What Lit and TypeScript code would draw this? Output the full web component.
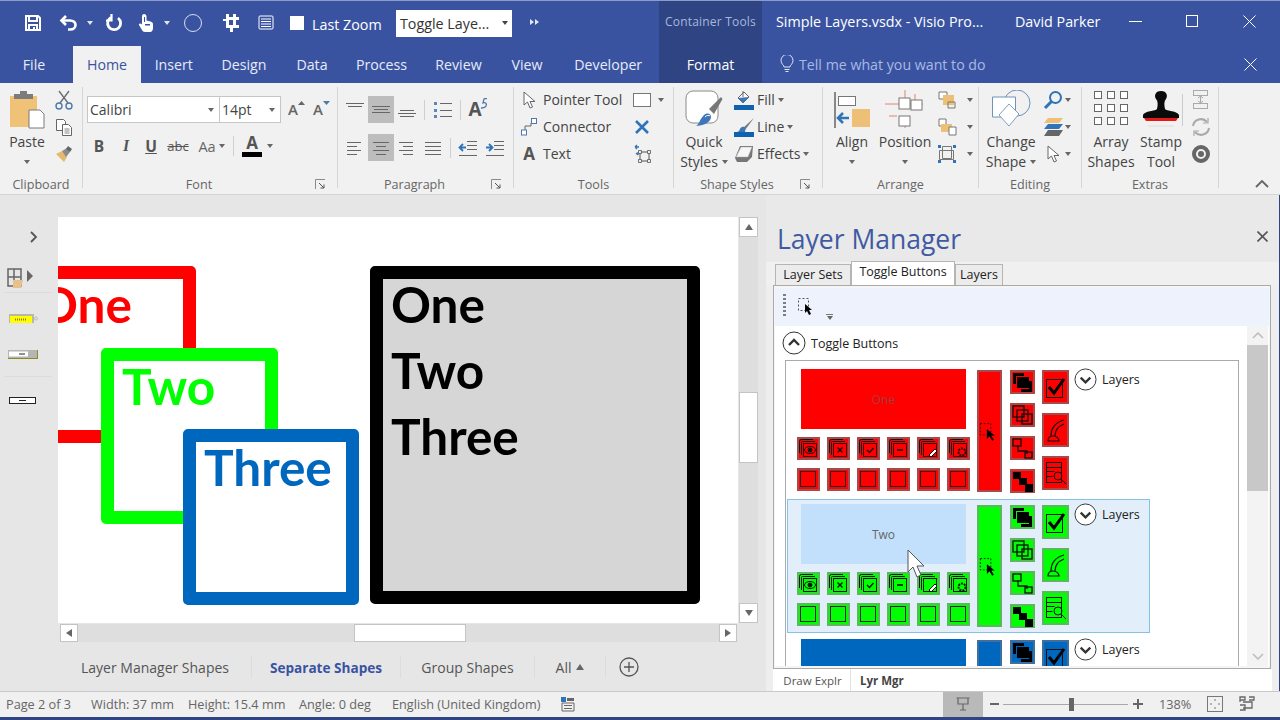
import { LitElement, html, css, svg } from "lit";
import { customElement } from "lit/decorators.js";

const caret = html`<span class="caret"></span>`;

// ---- quick access icons ----
const qSave = html`<svg width="18" height="18" viewBox="0 0 18 18" fill="none" stroke="#fff" stroke-width="2"><path d="M2 2h12l2 2v12H2z"/><path d="M5 2v5h8V2M5 16v-5h8v5"/><path d="M9 13h2v3H9z" fill="#fff" stroke="none"/></svg>`;
const qUndo = html`<svg width="20" height="18" viewBox="0 0 20 18" fill="none" stroke="#fff" stroke-width="2.6"><path d="M7 2 2.500 6.500 7 11"/><path d="M3 6.500h8c3.500 0 5.500 2 5.500 4.500S14.500 15.500 11 15.500H9"/></svg>`;
const qRedo = html`<svg width="18" height="18" viewBox="0 0 18 18" fill="none" stroke="#fff" stroke-width="2.8"><path d="M6 3.500A6.500 6.500 0 1 0 13 4"/><path d="M6.500 0v6.500H1" stroke-width="2.200"/></svg>`;
const qHand = html`<svg width="18" height="20" viewBox="0 0 18 20" fill="#fff"><path d="M7 1c1.500 0 2.500 1 2.500 2.500v4l4 1c1.500.4 2.500 1.300 2.500 3V15c0 2-1 4-3 4H8c-1.500 0-2.500-1-3-2L2 12c-.5-1 .8-2.200 2-1.300l1 .8V3.500C5 2 5.800 1 7 1z"/><path d="M7 4h1v5H7z" fill="#3a53a1"/><path d="M8 11h5v1.500H8z" fill="#3a53a1"/></svg>`;
const qCircle = html`<svg width="20" height="20" viewBox="0 0 20 20" fill="none" stroke="#d6def0" stroke-width="1"><circle cx="10" cy="10" r="8.500"/></svg>`;
const qCrop = html`<svg width="18" height="18" viewBox="0 0 18 18" fill="#fff"><path d="M5 0h3v3h4V0h3v3h3v3h-3v5h3v3h-3v0h-3v4H9v-4H5v-7H2V5h3zM8 6v5h4V6z"/></svg>`;
const qDoc = html`<svg width="16" height="16" viewBox="0 0 16 16" fill="none" stroke="#fff"><rect x="1" y="1" width="14" height="13" rx="1"/><path d="M3 4h10M3 6.500h10M3 9h10M3 11.500h10"/></svg>`;

// ---- ribbon icons ----
const paste = html`<svg width="36" height="40" viewBox="0 0 36 40"><path d="M1 6h27v31H1z" fill="#f0c277"/><path d="M5 4h19v5H5z" fill="#7c7c7c"/><path d="M11 1h7v4h-7z" fill="#7c7c7c"/><path d="M20 20h11l4 4v14H20z" fill="#fff" stroke="#7a7a7a"/></svg>`;
const cut = html`<svg width="18" height="20" viewBox="0 0 18 20" fill="none" stroke="#6a7078" stroke-width="1.400"><path d="M4 1l9 12M14 1 5 13"/><circle cx="4" cy="16" r="3" stroke="#4d79ae"/><circle cx="14" cy="16" r="3" stroke="#4d79ae"/></svg>`;
const copy = html`<svg width="18" height="18" viewBox="0 0 18 18" fill="#fff" stroke="#666"><path d="M1.500 1.500h7l2 2v9h-9z"/><path d="M7.500 6.500h6l3 3v8h-9z"/><path d="M9.500 11h5M9.500 13h5M9.500 15h5" stroke-width=".8"/></svg>`;
const painter = html`<svg width="18" height="18" viewBox="0 0 18 18"><path d="M1 9l6-3 5 6-3 5z" fill="#e7b96b"/><path d="M7 6l5-3 3 4-4 5z" fill="#8a8a8a"/><path d="M13 1l4 3-2 3-4-3z" fill="#666"/></svg>`;
const bullets = html`<svg width="20" height="18" viewBox="0 0 20 18"><path d="M1 1h3v3H1zM1 8h3v3H1zM1 14h3v3H1z" fill="#5b87bd"/><path d="M7 2.500h12M7 9.500h12M7 15.500h12" stroke="#666"/></svg>`;
const curl = html`<svg width="8" height="12" viewBox="0 0 8 12" fill="none" stroke="#4d79ae" stroke-width="1.300"><path d="M4 .7h3M4 .7 3 5c3-1 4 1 3 3S3 10 1 10"/></svg>`;
const outdent = html`<svg width="20" height="18" viewBox="0 0 20 18" fill="none" stroke="#666"><path d="M9 2.500h10M9 6.500h10M9 10.500h10M1 16.500h18" /><path d="M8 8.500H2M5 5 1.500 8.500 5 12" stroke="#2f73b8" stroke-width="1.800"/></svg>`;
const indent = html`<svg width="20" height="18" viewBox="0 0 20 18" fill="none" stroke="#666"><path d="M9 2.500h10M9 6.500h10M9 10.500h10M1 16.500h18" /><path d="M1 8.500h6M4 5l3.500 3.500L4 12" stroke="#2f73b8" stroke-width="1.800"/></svg>`;
const launcher = html`<svg width="11" height="11" viewBox="0 0 11 11" fill="none" stroke="#8a8a8a"><path d="M.5 10V.5H10"/><path d="M4 4l5 5M9 5.500V9H5.500" stroke="#555"/></svg>`;
const pointer = html`<svg width="13" height="18" viewBox="0 0 13 18" fill="#fff" stroke="#666"><path d="M1 1v13l3.500-3 2.500 6 2.500-1-2.500-5.500H12z"/></svg>`;
const connector = html`<svg width="18" height="18" viewBox="0 0 18 18" fill="#fff" stroke="#4d79ae"><path d="M5 12V8h6V5" fill="none" stroke="#666"/><rect x="1.500" y="12" width="5" height="5"/><rect x="11.500" y=".5" width="5" height="5"/></svg>`;
const xBlue = html`<svg width="14" height="14" viewBox="0 0 14 14" stroke="#2f73b8" stroke-width="2.600"><path d="M1 1l12 12M13 1 1 13"/></svg>`;
const rotateBox = html`<svg width="20" height="20" viewBox="0 0 20 20" fill="none"><rect x="8" y="8" width="9" height="9" stroke="#555"/><path d="M7 3H3M3 3 5 1M3 3 5 5M6 8v3M6 11 4 9" stroke="#2f73b8" stroke-width="1.300"/><path d="M6.500 6.500h3v3h-3zM15.500 6.500h3v3h-3zM6.500 15.500h3v3h-3zM15.500 15.500h3v3h-3z" fill="#eee" stroke="#555" stroke-width=".8"/></svg>`;
const quick = html`<svg width="38" height="38" viewBox="0 0 38 38"><rect x="1" y="1" width="32" height="32" rx="7" fill="#fff" stroke="#8a8a8a"/><path d="M24 19 36 7l1.500 2L29 24z" fill="#777"/><path d="M10 36c4 0 4-6 9-11 4-3 7-1 7 2 0 5-7 9-16 9z" fill="#3e77b8"/><path d="M20 27c2-2 4-2 5-1" stroke="#fff" fill="none"/></svg>`;
const fill = html`<svg width="20" height="20" viewBox="0 0 20 20"><path d="M4 8l6-6 5 5-6 6z" fill="#fff" stroke="#666"/><path d="M4 8l11-1-6 6z" fill="#3e77b8"/><path d="M9 1v6" stroke="#666"/><path d="M0 15h20v5H0z" fill="#0f62b0"/></svg>`;
const line = html`<svg width="20" height="20" viewBox="0 0 20 20"><path d="M20 1 9 11l2 2z" fill="#777"/><path d="M3 15c3 0 2-4 5-5s4 2 3 5z" fill="#3e77b8"/><path d="M0 15h20v5H0z" fill="#0f62b0"/></svg>`;
const effects = html`<svg width="20" height="18" viewBox="0 0 20 18"><path d="M1 13 6 1h13l-1 11-5 5H3z" fill="#777"/><path d="M2 12 7 2h11l-4 10z" fill="#f6f6f6" stroke="#aaa" stroke-width=".5"/></svg>`;
const align = html`<svg width="36" height="38" viewBox="0 0 36 38"><path d="M0 2h2v36H0z" fill="#888"/><rect x="4.500" y="6.500" width="17" height="9" fill="#fff" stroke="#777"/><path d="M18 19h18v18H18z" fill="#eec077"/><path d="M4 28h11M9 23l-5 5 5 5" fill="none" stroke="#2f73b8" stroke-width="2.500"/></svg>`;
const position = html`<svg width="40" height="40" viewBox="0 0 40 40" fill="none" stroke="#e2846f"><path d="M20 0v8M0 14h38M20 26v12M4 26h8M30 4v10"/><rect x="14" y="8" width="11" height="11" fill="#fff" stroke="#777"/><rect x="26" y="10" width="11" height="10" fill="#fff" stroke="#777"/><rect x="14" y="26" width="11" height="10" fill="#fff" stroke="#777"/></svg>`;
const order1 = html`<svg width="20" height="18" viewBox="0 0 20 18"><path d="M2 1h8v7H2z" fill="#fff" stroke="#777"/><path d="M6 4h11v10H6z" fill="#eec077"/><path d="M11 11h7v6h-7z" fill="none" stroke="#777"/></svg>`;
const order2 = html`<svg width="20" height="18" viewBox="0 0 20 18"><path d="M2 1h7v7H2z" fill="#fff" stroke="#777"/><path d="M4 6h11v8H4z" fill="#eec077"/><path d="M12 9h7v8h-7z" fill="#fff" stroke="#777"/></svg>`;
const group = html`<svg width="20" height="20" viewBox="0 0 20 20" fill="none" stroke="#777"><path d="M5.500 2.500h9v12h-9zM2.500 6.500h14v9h-14z"/><path d="M1 1h3v3H1zM16 1h3v3h-3zM1 16h3v3H1zM16 16h3v3h-3z" fill="#2f73b8" stroke="none"/></svg>`;
const change = html`<svg width="40" height="40" viewBox="0 0 40 40" fill="#fff" stroke="#6d92bd"><circle cx="26" cy="13" r="13" fill="none"/><path d="M1.500 7h23v20h-23z"/><path d="M18 14l10 10-10 12L8 25z" stroke="#7aa0c7"/></svg>`;
const search = html`<svg width="20" height="20" viewBox="0 0 20 20" fill="none" stroke="#2f73b8" stroke-width="2"><circle cx="12.500" cy="7.500" r="5.500"/><path d="M8.500 11.500 2 18" stroke-width="3"/></svg>`;
const layers = html`<svg width="20" height="20" viewBox="0 0 20 20"><path d="M5 1h15l-4 5H1z" fill="#eec077"/><path d="M5 7h15l-4 5H1z" fill="#2f73b8"/><path d="M5 13h15l-4 6H1z" fill="#666"/></svg>`;
const grid9 = html`<svg width="36" height="36" viewBox="0 0 36 36" fill="#fff" stroke="#666">${[0, 13, 26].map((y) => [0, 13, 26].map((x) => svg`<rect x="${x + 1.5}" y="${y + 1.5}" width="7" height="7"/>`))}</svg>`;
const stamp = html`<svg width="38" height="42" viewBox="0 0 38 42"><path d="M14 9c-2-3-1-8 5-8s7 5 5 8c-2 2-2 6-1 10 1 2 13 2 14 6v3H1v-3c1-4 13-4 14-6 1-4 1-8-1-10z" fill="#0b0b0b"/><path d="M2 28h34l-2 3H4z" fill="#e21a1a"/><path d="M6 36h26" stroke="#ddd"/></svg>`;
const align3 = html`<svg width="16" height="20" viewBox="0 0 16 20" fill="none" stroke="#a9a9a9"><rect x=".5" y=".5" width="14" height="5"/><rect x=".5" y="13.500" width="14" height="5"/><path d="M7.500 6v7M5 8l2.500-2L10 8M5 11l2.500 2 2.500-2"/></svg>`;
const refresh = html`<svg width="20" height="20" viewBox="0 0 20 20" fill="none" stroke="#a9a9a9" stroke-width="2"><path d="M2 9a8 8 0 0 1 14-4M18 11a8 8 0 0 1-14 4"/><path d="M17 1v5h-5M3 19v-5h5" stroke-width="1.200"/></svg>`;
const target = html`<svg width="20" height="20" viewBox="0 0 20 20" fill="none"><circle cx="10" cy="10" r="7" stroke="#666" stroke-width="4"/><circle cx="10" cy="10" r="3" fill="#666"/></svg>`;
const chevUp = html`<svg width="14" height="8" viewBox="0 0 14 8" fill="none" stroke="#666" stroke-width="1.800"><path d="M1 7l6-6 6 6"/></svg>`;
const xThin = html`<svg width="13" height="13" viewBox="0 0 13 13" stroke="#fff"><path d="M.5.5l12 12M12.500.5l-12 12"/></svg>`;
const bulb = html`<svg width="14" height="18" viewBox="0 0 14 18" fill="none" stroke="#dfe6f6"><path d="M4 12c0-2-3-3-3-6.500a6 6 0 0 1 12 0C13 9 10 10 10 12z"/><path d="M4.500 14.500h5M5.500 16.500h3"/></svg>`;

// ---- layer manager button icons ----
const selArrow = html`<svg width="24" height="24" viewBox="0 0 24 24"><rect x="1.500" y="3.500" width="12" height="13" fill="none" stroke="#111" stroke-dasharray="2 2"/><path d="M9 10v11l3-3 3 5 2-1-3-5h4z" fill="#000"/></svg>`;
const frame = (inner: unknown) => html`<svg width="19" height="19" viewBox="0 0 19 19" fill="none" stroke="#111"><path d="M.5 14V2.500a2 2 0 0 1 2-2H14"/><path d="M2.500 16V3.500a1 1 0 0 1 1-1H16"/><rect x="4.500" y="4.500" width="13" height="13"/>${inner}</svg>`;
const miniIcons: Record<string, unknown> = {
  eye: frame(svg`<ellipse cx="11" cy="11" rx="5.500" ry="3.500"/><circle cx="11" cy="11" r="2" fill="#111"/>`),
  x: frame(svg`<path d="M8.500 8.500l5 5M13.500 8.500l-5 5" stroke-width="1.400"/>`),
  check: frame(svg`<path d="M8 11l2.500 2.500L14.500 9" stroke-width="1.400"/>`),
  minus: frame(svg`<path d="M8 11h6" stroke-width="1.600"/>`),
  edit: frame(svg`<path d="M10 16l6-6 2 2-6 6z" fill="#fff"/>`),
  gear: frame(svg`<circle cx="13" cy="13" r="3.500" stroke-width="2" stroke-dasharray="2 1"/>`),
  blank: html`<svg width="19" height="19" viewBox="0 0 19 19" fill="none" stroke="#222"><rect x="1.500" y="1.500" width="15" height="15"/></svg>`,
};
const col3Icons = [
  html`<svg width="21" height="21" viewBox="0 0 21 21" fill="#000"><path d="M1 1h11v3H4v8H1z"/><rect x="5" y="5" width="12" height="11"/><path d="M20 9v11H9v-3h8V9z"/></svg>`,
  html`<svg width="21" height="21" viewBox="0 0 21 21" fill="none" stroke="#111" stroke-width="1.300"><rect x="1" y="1" width="11" height="11"/><rect x="5" y="5" width="11" height="11"/><rect x="10" y="9" width="10" height="10"/></svg>`,
  html`<svg width="21" height="21" viewBox="0 0 21 21" fill="none" stroke="#111" stroke-width="1.300"><path d="M6 7v6h9v3"/><rect x="1" y="1" width="8" height="7" fill="none"/><rect x="13" y="14" width="7" height="6" fill="none"/></svg>`,
  html`<svg width="21" height="21" viewBox="0 0 21 21" fill="#000"><rect x="1" y="1" width="8" height="7"/><rect x="7" y="7" width="8" height="7"/><rect x="13" y="13" width="8" height="8"/></svg>`,
];
const col4Icons = [
  html`<svg width="23" height="28" viewBox="0 0 23 28" fill="none" stroke="#111"><rect x="2.500" y="6.500" width="16" height="18"/><path d="M5 14l5 6L20 6" stroke="#000" stroke-width="3"/></svg>`,
  html`<svg width="21" height="28" viewBox="0 0 21 28" fill="none" stroke="#111"><path d="M6 20C6 10 12 6 19 4M10 20c0-6 4-10 9-12" stroke-width="1.200"/><path d="M3 25c0-3 2-5 5-5s6 2 6 5z" stroke-width="1.200"/></svg>`,
  html`<svg width="21" height="28" viewBox="0 0 21 28" fill="none" stroke="#111"><rect x="1.500" y="3.500" width="15" height="20"/><path d="M1.500 8.500h15M1.500 12.500h8M1.500 17.500h6"/><circle cx="13" cy="17" r="4"/><path d="M16 20l5 5"/></svg>`,
];
const chevCircle = (down = true) => html`<svg width="24" height="24" viewBox="0 0 24 24" fill="#fff" stroke="#333"><circle cx="12" cy="12" r="11"/><path d="${down ? "M7 10l5 5 5-5" : "M7 14l5-5 5 5"}" fill="none" stroke-width="2.400"/></svg>`;

@customElement("layer-row")
class LayerRow extends LitElement {
  static properties = {
    name: {},
    fillColor: {},
    edge: {},
    big: {},
    active: { type: Boolean },
  };
  declare name: string;
  declare fillColor: string;
  declare edge: string;
  declare big: string;
  declare active: boolean;

  static styles = css`
    :host { display: block; }
    .row { height: 134px; margin-bottom: 1px; width: 363px; box-sizing: border-box; border: 1px solid transparent; padding: 4px 0 0 9px; display: flex; align-items: flex-start; }
    .row.on { border-color: #84c3e6; background: #e2effa; }
    .left { width: 173px; display: grid; gap: 8px; }
    .bigbtn { width: 165px; height: 60px; margin-left: 4px; display: flex; align-items: center; justify-content: center; font: 12px "Open Sans", sans-serif; }
    .minis { display: grid; grid-template-columns: repeat(6, 23px); column-gap: 7px; height: 23px; }
    .b { box-sizing: border-box; border: 2px solid var(--e); background: var(--c); display: flex; align-items: center; justify-content: center; }
    .tall { width: 25px; height: 122px; margin: 1px 0 0 7px; }
    .c3 { width: 25px; margin: 1px 0 0 8px; display: grid; row-gap: 9px; }
    .c3 .b { height: 24px; }
    .c4 { width: 25px; margin: 1px 0 0 7px; display: grid; row-gap: 9px; }
    .c4 .b { height: 34px; }
    .more { display: flex; align-items: center; gap: 5px; margin: -1px 0 0 7px; height: 22px; font: 12.500px "Open Sans", sans-serif; color: #222; }
    .more svg { display: block; width: 23px; height: 23px; }
  `;

  render() {
    const vars = `--c:${this.fillColor};--e:${this.edge}`;
    const bigStyle = `background:${this.big};color:${this.active ? "#666" : "#a83c3c"}`;
    return html`
      <div class="row ${this.active ? "on" : ""}" style="${vars}">
        <div class="left">
          <div class="bigbtn" style="${bigStyle}">${this.name}</div>
          <div class="minis">${["eye", "x", "check", "minus", "edit", "gear"].map((k) => html`<div class="b">${miniIcons[k]}</div>`)}</div>
          <div class="minis">${[1, 2, 3, 4, 5, 6].map(() => html`<div class="b">${miniIcons.blank}</div>`)}</div>
        </div>
        <div class="b tall">${selArrow}</div>
        <div class="c3">${col3Icons.map((i) => html`<div class="b">${i}</div>`)}</div>
        <div class="c4">${col4Icons.map((i) => html`<div class="b">${i}</div>`)}</div>
        <div class="more">${chevCircle()}<span>Layers</span></div>
      </div>
    `;
  }
}

@customElement("app-root")
class AppRoot extends LitElement {
  static styles = css`
    :host { display: block; width: 1280px; height: 720px; overflow: hidden; font-family: "Open Sans", "Noto Sans", sans-serif; color: #444; background: #e6e6e6; position: relative; }
    svg { display: block; }
    .caret { display: inline-block; width: 0; height: 0; border: 3.500px solid transparent; border-top: 4px solid #666; border-bottom: 0; }

    /* header */
    .head { background: #3a53a1; color: #fff; border-top: 1px solid #8c9cc9; height: 82px; }
    .titlebar { height: 44px; display: grid; grid-template-columns: 24px 18px 17px 20px 22px 26px 10px 18px 24px 28px 14px 18px 11px 32px 30px 0 84px 1fr; align-items: center; font-size: 14.300px; }
    .titlebar > * { justify-self: center; }
    .titlebar .caret { border-top-color: #dfe6f6; }
    .check { width: 14px; height: 14px; background: #fff; }
    .titlebar > .zoomlbl { justify-self: start; white-space: nowrap; padding-top: 2px; }
    .combo-q { width: 116px; height: 27px; box-sizing: border-box; background: #fff; color: #333; display: flex; align-items: center; justify-content: space-between; padding: 0 4px; }
    .titlebar .combo-q .caret { border-top-color: #444; }
    .ff { justify-self: start; margin-left: 18px; margin-bottom: 3px; }
    .titlebar > .titleright { justify-self: stretch; display: grid; grid-template-columns: 116px 147px 103px 253px 92px 1fr; align-items: center; height: 44px; }
    .tabs { height: 38px; display: grid; grid-template-columns: 73px 68px 65.500px 75px 61px 78px 76px 61px 101.500px 103px 1fr; align-items: stretch; }
    .tab { display: flex; align-items: center; justify-content: center; font-size: 14.200px; color: #e6ebf7; }
    .tab.file { padding-right: 5px; }
    .tab.home { background: #f1f1f1; color: #3a53a1; margin-top: 1px; }
    .band { background: #2e4483; color: #fff; }
    .ctitle { display: flex; align-items: center; color: #a9b7dc; font-size: 12px; letter-spacing: .2px; justify-content: center; align-self: stretch; background: #2e4483; padding-bottom: 3px; }
    .ttl { white-space: nowrap; color: #fff; padding-bottom: 3px; }
    .ttl.first { padding-left: 14px; }
    .winbtns { display: grid; grid-template-columns: 57px 57px 57px; justify-items: center; align-items: center; padding-bottom: 3px; }
    .tell { display: flex; align-items: center; gap: 5px; padding-left: 18px; color: #a9b9e4; font-size: 14.200px; white-space: nowrap; }
    .tellx { margin-left: auto; margin-right: 23px; }

    /* ribbon */
    .ribbon { height: 111px; background: #f1f1f1; border-bottom: 1px solid #d5d5d5; display: flex; font-size: 14px; color: #444; }
    .g { display: flex; flex-direction: column; flex: none; }
    .body { height: 91px; display: grid; box-sizing: border-box; }
    .label { height: 20px; display: flex; align-items: center; font-size: 12.600px; color: #666; }
    .label span { flex: 1; text-align: center; }
    .label i { width: 22px; display: block; font-style: normal; }
    .vsep { width: 1px; background: #d6d6d6; margin: 4px 0 6px; flex: none; }
    .c { display: flex; align-items: center; justify-content: center; white-space: nowrap; }
    .l { display: flex; align-items: center; white-space: nowrap; gap: 3px; }
    .big { display: flex; flex-direction: column; align-items: center; padding-top: 7px; line-height: 20px; }
    .big .ic { height: 42px; }
    .big .t { white-space: nowrap; display: flex; align-items: center; gap: 4px; }
    .big .cr { height: 20px; display: flex; align-items: center; }
    .rows3 { display: grid; grid-template-rows: 27px 27px 27px; padding-top: 3px; }

    .g1 { width: 82px; }
    .g1 .body { grid-template-columns: 54px 20px; }
    .g2 { width: 254px; }
    .g2 .body { padding: 13px 0 0 4px; align-content: start; row-gap: 10px; }
    .fontrow { display: flex; height: 27px; }
    .combo { box-sizing: border-box; height: 27px; background: #fff; border: 1px solid #c6c6c6; display: flex; align-items: center; justify-content: space-between; padding: 0 5px 0 2px; color: #444; }
    .combo.a { width: 132px; border-right: 0; }
    .combo.b { width: 62px; }
    .sz { width: 25px; height: 27px; align-items: flex-start; padding-top: 3px; box-sizing: border-box; }
    .sz.first { margin-left: 3px; }
    .ga { font: 600 15px/20px "Open Sans", sans-serif; color: #666; }
    .sz svg { margin: 2px 0 0 0; }
    .fmt { display: grid; height: 26px; grid-template-columns: 24px 30px 20px 34px 24px 6px 16px 22px 14px; }
    .fmt .bold { font: 700 15.500px "Open Sans", sans-serif; color: #555; }
    .fmt .ital { font: italic 700 16px "Liberation Serif", serif; color: #555; }
    .fmt .und { font: 700 15.500px "Open Sans", sans-serif; color: #555; text-decoration: underline; }
    .fmt .abc { font-size: 13px; color: #555; text-decoration: line-through; }
    .fmt .aa { font-size: 14.500px; color: #666; }
    .tsep { width: 1px; height: 20px; background: #cfcfcf; }
    .fontA { display: flex; flex-direction: column; align-items: center; font: 700 17px/15px "Open Sans", sans-serif; color: #555; }
    .fontA b { display: block; width: 20px; height: 5px; background: #000; margin-top: 2px; }
    .bigA { font: 700 19px/22px "Open Sans", sans-serif; color: #555; }
    .rotA { align-items: flex-start; padding-top: 2px; box-sizing: border-box; height: 27px; }
    .rotA svg { margin: 0 0 0 -2px; }
    .g3 { width: 175px; }
    .g3 .body { padding: 13px 0 0 4px; align-content: start; row-gap: 11px; }
    .p1, .p2 { display: grid; height: 27px; }
    .p1 { grid-template-columns: 26px 26px 26px 8px 30px 4px 32px; }
    .p2 { grid-template-columns: 26px 26px 26px 26px 8px 28px 26px; }
    .sel { background: #bdbdbd; }
    .g4 { width: 159px; }
    .g4 .body { grid-template-columns: 28px 88px 22px 16px; grid-template-rows: 27px 27px 27px; padding: 3px 0 0 1px; }
    .g5 { width: 148px; }
    .g5 .body { grid-template-columns: 60px 1fr; }
    .g6 { width: 155px; }
    .g6 .body { grid-template-columns: 58px 48px 36px 10px; }
    .g7 { width: 102px; }
    .g7 .body { grid-template-columns: 64px 18px 14px; }
    .g8 { width: 136px; }
    .g8 .body { grid-template-columns: 58px 42px 1px 35px; }
    .stampsep { width: 1px; height: 32px; background: #ccc; margin-top: 11px; }
    .rest { flex: 1; display: flex; justify-content: flex-end; align-items: flex-end; padding: 0 11px 6px 0; }

    /* work area */
    .work { height: 496px; display: flex; }
    .left { width: 766px; display: grid; grid-template-columns: 58px 680px 20px 8px; grid-template-rows: 22px 406px 20px 48px; flex: none; }
    .rail { grid-row: 2; grid-column: 1; display: flex; flex-direction: column; align-items: stretch; }
    .rail .chev { align-self: flex-end; margin: 14px 20px 0 0; }
    .railopen { margin: 25px 0 0 7px; padding-bottom: 4px; }
    .railsep { height: 1px; background: #dcdcdc; margin: 0 6px 0 4px; }
    .st1 { margin: 21px 0 0 9px; }
    .st2 { margin: 26px 0 0 8px; }
    .railsep.low { margin-top: 16px; }
    .st3 { margin: 20px 0 0 9px; }
    .canvas { grid-row: 2; grid-column: 2; background: #fff; position: relative; overflow: hidden; }
    .shape { position: absolute; box-sizing: border-box; border-radius: 5px; border: 13.500px solid; font: 700 49.500px/66px Lato, sans-serif; padding: 0 0 0 8px; }
    .red { left: -41px; top: 49px; width: 179px; height: 177px; border-color: #f00; color: #f00; }
    .green { left: 43px; top: 131px; width: 177px; height: 176px; border-color: #0f0; color: #0f0; background: #fff; }
    .blue { left: 125px; top: 212px; width: 176px; height: 176px; border-color: #0067be; color: #0067be; background: #fff; }
    .black { left: 312px; top: 49px; width: 330px; height: 338px; border-color: #000; color: #000; background: #d6d6d6; }
    .shape div { margin-top: -8px; height: 66px; }
    .shape div + div { margin-top: 0; }
    .vscroll { grid-row: 2; grid-column: 3; background: #dedede; display: flex; flex-direction: column; justify-content: space-between; width: 19px; margin-left: 1px; position: relative; }
    .sbtn { background: #fff; border: 1px solid #c4c4c4; box-sizing: border-box; display: flex; align-items: center; justify-content: center; flex: none; }
    .vscroll .sbtn { height: 20px; }
    .vscroll .vthumb { position: absolute; top: 175px; left: 0; width: 19px; height: 71px; }
    .hscroll { grid-row: 3; grid-column: 2; background: #dedede; display: flex; justify-content: space-between; height: 18px; margin: 1px 1px 0 2px; position: relative; }
    .hscroll .sbtn { width: 18px; }
    .hscroll .hthumb { position: absolute; left: 294px; top: 0; height: 18px; width: 112px; }
    .tri { width: 0; height: 0; border: 4px solid transparent; }
    .tri.up { border-bottom: 6px solid #666; border-top: 0; }
    .tri.down { border-top: 6px solid #666; border-bottom: 0; }
    .tri.lf { border-right: 6px solid #666; border-left: 0; }
    .tri.rt { border-left: 6px solid #666; border-right: 0; }
    .pages { grid-row: 4; grid-column: 1 / 5; display: grid; grid-template-columns: 252px 149px 134px 71px 46px; align-items: center; font-size: 14px; color: #555; }
    .pg { height: 22px; display: flex; align-items: center; justify-content: flex-end; border-right: 1px solid #dcdcdc; padding-right: 22px; white-space: nowrap; gap: 5px; }
    .pg.mid { justify-content: center; padding: 0; }
    .pg.cur { color: #3a53a1; font-weight: 700; font-size: 13.600px; }
    .pg.plain { border: 0; justify-content: center; padding: 0; }

    /* layer manager */
    .panel { width: 513px; flex: none; display: flex; flex-direction: column; background: #eeeeee; border-right: 1px solid #2e4483; }
    .phead { height: 67px; box-sizing: border-box; padding: 24px 0 0 11px; display: flex; justify-content: space-between; font-size: 26.500px; line-height: 40px; color: #3f5aa3; font-weight: 400; background: #e9e9e9; }
    .phead svg { margin: 12px 11px 0 0; }
    .ptabs { display: flex; height: 23px; padding-left: 9px; align-items: flex-end; font-size: 12.500px; color: #222; background: #f0f0f0; }
    .ptab { height: 21px; box-sizing: border-box; border: 1px solid #b5b5b5; border-bottom: 0; background: #ececec; display: flex; align-items: center; justify-content: center; padding-bottom: 2px; }
    .ptab.on { height: 24px; background: #fff; padding-bottom: 4px; }
    .sets { width: 76px; } .toggle { width: 104px; } .lay { width: 48px; }
    .pbox { margin: 0 8px 0 7px; height: 384px; box-sizing: border-box; border: 1px solid #aaa; padding: 2px 1px; background: #f5f5f5; display: flex; flex-direction: column; }
    .tool { height: 38px; background: #eef2fc; flex: none; display: flex; padding: 6px 0 0 8px; box-sizing: border-box; gap: 12px; }
    .tool > svg { margin-top: 4px; }
    .grip { width: 3px; height: 22px; background: repeating-linear-gradient(#7d7d7d 0 2px, transparent 2px 4px); }
    .tcar { align-self: flex-end; margin: 0 0 6px 0; display: flex; flex-direction: column; align-items: center; gap: 1px; }
    .tcar i { display: block; width: 7px; height: 1px; background: #777; }
    .plist { flex: 1; display: flex; background: #fff; min-height: 0; }
    .scrollmain { width: 472px; overflow: hidden; flex: none; }
    .grp { height: 34px; display: flex; align-items: center; gap: 5px; padding-left: 7px; font-size: 12.500px; color: #222; }
    .inner { margin-left: 10px; width: 454px; box-sizing: border-box; border: 1px solid #aaa; padding: 3px 0 0 1px; height: 400px; }
    .pscroll { width: 21px; background: #f3f3f3; display: flex; flex-direction: column; justify-content: space-between; position: relative; }
    .pscroll .ar { height: 19px; display: flex; align-items: center; justify-content: center; }
    .pthumb { position: absolute; top: 19px; left: 0; right: 0; height: 146px; background: #c8c8c8; }
    .btabs { flex: 1; display: flex; align-items: center; background: #fff; margin: 0 7px; font-size: 11.500px; color: #555; }
    .btab { height: 100%; display: flex; align-items: center; justify-content: center; }
    .btab.first { width: 78px; border-right: 1px solid #e2e2e2; padding-left: 2px; box-sizing: border-box; }
    .btab.sec { padding-left: 9px; font-weight: 700; color: #444; }

    /* status */
    .status { height: 26px; box-sizing: border-box; background: #f0f0f0; border-top: 1px solid #c9c9c9; display: flex; font-size: 12.700px; color: #666; align-items: stretch; }
    .st { display: flex; align-items: center; white-space: nowrap; flex: none; padding-bottom: 1px; }
    .s1 { width: 85px; padding-left: 6px; }
    .s2 { width: 97px; } .s3 { width: 111px; } .s4 { width: 93px; } .s5 { width: 169px; }
    .s6 { width: 382px; }
    .present { width: 40px; background: #b9b9b9; justify-content: center; }
    .zoomer { width: 167px; }
    .minus { margin-left: 7px; }
    .zsl { flex: none; width: 125px; height: 1px; background: #a8a8a8; margin: 0 5px 0 4px; position: relative; }
    .zsl i { position: absolute; left: 66px; top: -6px; width: 5px; height: 13px; background: #666; }
    .pct { width: 30px; margin-left: 9px; }
    .fit { margin-left: 18px; }
    .tile { margin-left: 16px; }
    .bottom { height: 3px; background: #2e4483; }
    .cursor { position: absolute; left: 906px; top: 549px; }
  `;

  render() {
    return html`
      <div class="head">
        ${this.topBar()}
        <div class="tabs">
          <div class="tab file">File</div>
          <div class="tab home">Home</div>
          <div class="tab">Insert</div>
          <div class="tab">Design</div>
          <div class="tab">Data</div>
          <div class="tab">Process</div>
          <div class="tab">Review</div>
          <div class="tab">View</div>
          <div class="tab">Developer</div>
          <div class="tab band">Format</div>
          <div class="tell">${bulb}<span>Tell me what you want to do</span><span class="tellx">${xThin}</span></div>
        </div>
      </div>
      ${this.ribbon()}
      <div class="work">
        <div class="left">
          ${this.rail()}
          <div class="canvas">
            <div class="shape red"><div>One</div></div>
            <div class="shape green"><div>Two</div></div>
            <div class="shape blue"><div>Three</div></div>
            <div class="shape black"><div>One</div><div>Two</div><div>Three</div></div>
          </div>
          <div class="vscroll">
            <div class="sbtn"><i class="tri up"></i></div>
            <div class="sbtn vthumb"></div>
            <div class="sbtn"><i class="tri down"></i></div>
          </div>
          <div class="hscroll">
            <div class="sbtn"><i class="tri lf"></i></div>
            <div class="sbtn hthumb"></div>
            <div class="sbtn"><i class="tri rt"></i></div>
          </div>
          <div class="pages">
            <div class="pg">Layer Manager Shapes</div>
            <div class="pg mid cur">Separate Shapes</div>
            <div class="pg mid">Group Shapes</div>
            <div class="pg mid">All <i class="tri up"></i></div>
            <div class="pg plain">
              <svg width="20" height="20" viewBox="0 0 20 20" fill="none" stroke="#555" stroke-width="1.300"><circle cx="10" cy="10" r="9"/><path d="M10 5v10M5 10h10"/></svg>
            </div>
          </div>
        </div>
        ${this.panel()}
      </div>
      ${this.status()}
      <div class="bottom"></div>
      <svg class="cursor" width="20" height="30" viewBox="0 0 20 30" fill="#fff" stroke="#555"><path d="M2 1v22l5-5 4 10 4-2-4-9h7z"/></svg>
    `;
  }

  topBar() {
    return html`
      <div class="titlebar">
        <span></span>
        ${qSave}<span></span>
        ${qUndo}${caret}
        ${qRedo}<span></span>
        ${qHand}${caret}
        ${qCircle}<span></span>
        ${qCrop}<span></span>
        ${qDoc}
        <span class="check"></span>
        <span></span>
        <span class="zoomlbl">Last Zoom</span>
        <div class="titleright">
          <div class="combo-q"><span>Toggle Laye...</span>${caret}</div>
          <svg class="ff" width="9" height="8" viewBox="0 0 9 8" fill="#dfe6f6"><path d="M0 1l4 3-4 3zM5 1l4 3-4 3z"/></svg>
          <div class="ctitle">Container Tools</div>
          <span class="ttl first">Simple Layers.vsdx  -  Visio Pro...</span>
          <span class="ttl">David Parker</span>
          <div class="winbtns">
            <svg width="13" height="2" viewBox="0 0 13 2" stroke="#fff"><path d="M0 .5h13"/></svg>
            <svg width="13" height="13" viewBox="0 0 13 13" fill="none" stroke="#fff"><rect x=".5" y=".5" width="11" height="11"/></svg>
            ${xThin}
          </div>
        </div>
      </div>`;
  }

  ribbon() {
    const label = (t: string, more = false) => html`<div class="label"><span>${t}</span>${more ? html`<i>${launcher}</i>` : ""}</div>`;
    const big = (ic: unknown, a: string, b: string, arrow: "two" | "inline") => html`
      <div class="big">
        <div class="ic">${ic}</div>
        <div class="t">${a}</div>
        ${arrow === "two" ? html`<div class="cr">${caret}</div>` : html`<div class="t">${b}${caret}</div>`}
      </div>`;
    const alignIcon = (kind: number) => {
      const ps = ["M2 2.500h18M4 5.500h14", "M2 5.500h18M4 8.500h14M2 11.500h18", "M4 9.500h14M2 12.500h18M4 15.500h14"];
      return html`<svg width="22" height="18" viewBox="0 0 22 18" fill="none" stroke="#666"><path d="${ps[kind]}"/></svg>`;
    };
    const textAlign = (k: number) => {
      const ps = [
        "M3 3.500h14M3 7.500h10M3 11.500h14M3 15.500h10",
        "M3 3.500h16M6 7.500h10M3 11.500h16M6 15.500h10",
        "M3 3.500h14M7 7.500h10M3 11.500h14M7 15.500h10",
        "M3 3.500h16M3 7.500h16M3 11.500h16M3 15.500h16",
      ];
      return html`<svg width="22" height="18" viewBox="0 0 22 18" fill="none" stroke="#666"><path d="${ps[k]}"/></svg>`;
    };
    return html`
      <div class="ribbon">
        <div class="g g1">
          <div class="body">
            ${big(paste, "Paste", "", "two")}
            <div class="rows3"><div class="c">${cut}</div><div class="c">${copy}</div><div class="c">${painter}</div></div>
          </div>
          ${label("Clipboard")}
        </div>
        <div class="vsep"></div>
        <div class="g g2">
          <div class="body">
            <div class="fontrow">
              <div class="combo a"><span>Calibri</span>${caret}</div>
              <div class="combo b"><span>14pt</span>${caret}</div>
              <div class="c sz first"><span class="ga">A</span><svg width="7" height="4" viewBox="0 0 7 4"><path d="M0 4l3.500-4L7 4z" fill="#666"/></svg></div>
              <div class="c sz"><span class="ga">A</span><svg width="7" height="4" viewBox="0 0 7 4"><path d="M0 0l3.500 4L7 0z" fill="#4d79ae"/></svg></div>
            </div>
            <div class="fmt">
              <div class="c bold">B</div>
              <div class="c ital">I</div>
              <div class="c und">U</div>
              <div class="c abc">abc</div>
              <div class="c aa">Aa</div>
              <div class="c">${caret}</div>
              <div class="c"><span class="tsep"></span></div>
              <div class="c"><div class="fontA">A<b></b></div></div>
              <div class="c">${caret}</div>
            </div>
          </div>
          ${label("Font", true)}
        </div>
        <div class="vsep"></div>
        <div class="g g3">
          <div class="body">
            <div class="p1">
              <div class="c">${alignIcon(0)}</div>
              <div class="c sel">${alignIcon(1)}</div>
              <div class="c">${alignIcon(2)}</div>
              <div class="c"><span class="tsep"></span></div>
              <div class="c">${bullets}</div>
              <div class="c"><span class="tsep"></span></div>
              <div class="c rotA"><span class="bigA">A</span>${curl}</div>
            </div>
            <div class="p2">
              <div class="c">${textAlign(0)}</div>
              <div class="c sel">${textAlign(1)}</div>
              <div class="c">${textAlign(2)}</div>
              <div class="c">${textAlign(3)}</div>
              <div class="c"><span class="tsep"></span></div>
              <div class="c">${outdent}</div>
              <div class="c">${indent}</div>
            </div>
          </div>
          ${label("Paragraph", true)}
        </div>
        <div class="vsep"></div>
        <div class="g g4">
          <div class="body">
            <div class="c">${pointer}</div>
            <div class="l">Pointer Tool</div>
            <div class="c"><svg width="18" height="14" viewBox="0 0 18 14" fill="#fff" stroke="#777"><rect x=".5" y=".5" width="17" height="13"/></svg></div>
            <div class="c">${caret}</div>
            <div class="c">${connector}</div>
            <div class="l">Connector</div>
            <div class="c">${xBlue}</div>
            <span></span>
            <div class="c"><span class="fontA">A</span></div>
            <div class="l">Text</div>
            <div class="c">${rotateBox}</div>
            <span></span>
          </div>
          ${label("Tools")}
        </div>
        <div class="vsep"></div>
        <div class="g g5">
          <div class="body">
            ${big(quick, "Quick", "Styles", "inline")}
            <div class="rows3">
              <div class="l">${fill}<span>Fill</span>${caret}</div>
              <div class="l">${line}<span>Line</span>${caret}</div>
              <div class="l">${effects}<span>Effects</span>${caret}</div>
            </div>
          </div>
          ${label("Shape Styles", true)}
        </div>
        <div class="vsep"></div>
        <div class="g g6">
          <div class="body">
            ${big(align, "Align", "", "two")}
            ${big(position, "Position", "", "two")}
            <div class="rows3"><div class="c">${order1}</div><div class="c">${order2}</div><div class="c">${group}</div></div>
            <div class="rows3"><div class="c">${caret}</div><div class="c">${caret}</div><div class="c">${caret}</div></div>
          </div>
          ${label("Arrange")}
        </div>
        <div class="vsep"></div>
        <div class="g g7">
          <div class="body">
            ${big(change, "Change", "Shape", "inline")}
            <div class="rows3"><div class="c">${search}</div><div class="c">${layers}</div><div class="c">${pointer}</div></div>
            <div class="rows3"><div class="c">${caret}</div><div class="c">${caret}</div><div class="c">${caret}</div></div>
          </div>
          ${label("Editing")}
        </div>
        <div class="vsep"></div>
        <div class="g g8">
          <div class="body">
            <div class="big"><div class="ic">${grid9}</div><div class="t">Array</div><div class="t">Shapes</div></div>
            <div class="big"><div class="ic">${stamp}</div><div class="t">Stamp</div><div class="t">Tool</div></div>
            <div class="stampsep"></div>
            <div class="rows3"><div class="c">${align3}</div><div class="c">${refresh}</div><div class="c">${target}</div></div>
          </div>
          ${label("Extras")}
        </div>
        <div class="vsep"></div>
        <div class="rest">${chevUp}</div>
      </div>`;
  }

  rail() {
    return html`
      <div class="rail">
        <svg class="chev" width="8" height="12" viewBox="0 0 8 12" fill="none" stroke="#555" stroke-width="1.800"><path d="M1 1l5 5-5 5"/></svg>
        <div class="railopen">
          <svg width="28" height="20" viewBox="0 0 28 20"><path d="M1 1h13v17H1zM1 9h13M7 1v17" fill="none" stroke="#666" stroke-width="1.500"/><path d="M6 12h10l-2 8H6z" fill="#e5c18b"/><path d="M20 2l6 6-6 6z" fill="#666"/></svg>
        </div>
        <div class="railsep"></div>
        <div class="st1">
          <svg width="30" height="10" viewBox="0 0 30 10"><rect x="0" y="0" width="25" height="9" fill="#b9b9a0"/><rect x="1" y="2" width="22" height="7" fill="#ff0"/><path d="M6 5.500h12" stroke="#8a7a20" stroke-width="2" stroke-dasharray="1 1"/><circle cx="27" cy="4.500" r="1.500" fill="none" stroke="#bbb"/></svg>
        </div>
        <div class="st2">
          <svg width="30" height="10" viewBox="0 0 30 10"><rect x="0" y="0" width="30" height="9" fill="#b5b5b5"/><path d="M0 8.500h30M29.500 0v9" stroke="#8f8a20"/><rect x="1" y="1.500" width="19" height="5" fill="#fff"/><path d="M11 4h6" stroke="#222"/></svg>
        </div>
        <div class="railsep low"></div>
        <div class="st3">
          <svg width="27" height="7" viewBox="0 0 27 7"><rect x=".5" y=".5" width="26" height="6" fill="#fff" stroke="#222"/><path d="M10 3.500h7" stroke="#222"/></svg>
        </div>
      </div>`;
  }

  panel() {
    return html`
      <div class="panel">
        <div class="phead"><span>Layer Manager</span>
          <svg width="11" height="11" viewBox="0 0 11 11" stroke="#555" stroke-width="1.600"><path d="M.5.5l10 10M10.500.5l-10 10"/></svg>
        </div>
        <div class="ptabs">
          <div class="ptab sets">Layer Sets</div>
          <div class="ptab on toggle">Toggle Buttons</div>
          <div class="ptab lay">Layers</div>
        </div>
        <div class="pbox">
          <div class="tool">
            <div class="grip"></div>
            <svg width="16" height="18" viewBox="0 0 16 18"><rect x=".5" y=".5" width="10" height="12" fill="none" stroke="#555" stroke-dasharray="2 2"/><path d="M7 6v9l2-2 2 4 2-1-2-4h3z" fill="#000"/></svg>
            <div class="tcar"><i></i>${caret}</div>
          </div>
          <div class="plist">
            <div class="scrollmain">
              <div class="grp">${chevCircle(false)}<span>Toggle Buttons</span></div>
              <div class="inner">
                <layer-row name="One" fillColor="#ff0000" edge="#a84a4a" big="#ff0000"></layer-row>
                <layer-row name="Two" fillColor="#00ff00" edge="#5cb85c" big="#c2e0fb" active></layer-row>
                <layer-row name="" fillColor="#0067be" edge="#3f6f9f" big="#0067be"></layer-row>
              </div>
            </div>
            <div class="pscroll">
              <div class="ar"><svg width="12" height="7" viewBox="0 0 12 7" fill="none" stroke="#bbb" stroke-width="1.500"><path d="M1 6l5-5 5 5"/></svg></div>
              <div class="pthumb"></div>
              <div class="ar"><svg width="12" height="7" viewBox="0 0 12 7" fill="none" stroke="#bbb" stroke-width="1.500"><path d="M1 1l5 5 5-5"/></svg></div>
            </div>
          </div>
        </div>
        <div class="btabs">
          <div class="btab first">Draw Explr</div>
          <div class="btab sec">Lyr Mgr</div>
        </div>
      </div>`;
  }

  status() {
    return html`
      <div class="status">
        <div class="st s1">Page 2 of 3</div>
        <div class="st s2">Width: 37 mm</div>
        <div class="st s3">Height: 15.4 mm</div>
        <div class="st s4">Angle: 0 deg</div>
        <div class="st s5">English (United Kingdom)</div>
        <div class="st s6">
          <svg width="14" height="16" viewBox="0 0 14 16"><path d="M0 1h5v5H0z" fill="#2f73b8"/><path d="M1 7h12v8H1z" fill="none" stroke="#666"/><path d="M6 2h7v3H6zM3 9h8v1H3zM3 12h8v1H3z" fill="#666"/></svg>
        </div>
        <div class="st present">
          <svg width="14" height="14" viewBox="0 0 14 14" fill="none" stroke="#666" stroke-width="1.200"><path d="M.5 1h13M2 1v6h10V1M7 7v6M4 13h6"/></svg>
        </div>
        <div class="st zoomer">
          <svg class="minus" width="9" height="2" viewBox="0 0 9 2"><path d="M0 0h9v2H0z" fill="#666"/></svg>
          <div class="zsl"><i></i></div>
          <svg width="10" height="10" viewBox="0 0 10 10"><path d="M4 0h2v10H4zM0 4h10v2H0z" fill="#666"/></svg>
        </div>
        <div class="st pct">138%</div>
        <div class="st fit">
          <svg width="16" height="16" viewBox="0 0 16 16" fill="none" stroke="#777"><rect x=".5" y=".5" width="15" height="15"/><path d="M8 3v2M8 11v2M3 8h2M11 8h2"/></svg>
        </div>
        <div class="st tile">
          <svg width="16" height="16" viewBox="0 0 16 16" fill="none" stroke="#666" stroke-width="1.300"><path d="M1 6V1h5v3H1M10 1h5v3h-5M1 9h5v5H1M4 6h9v6H4"/></svg>
        </div>
      </div>`;
  }
}
